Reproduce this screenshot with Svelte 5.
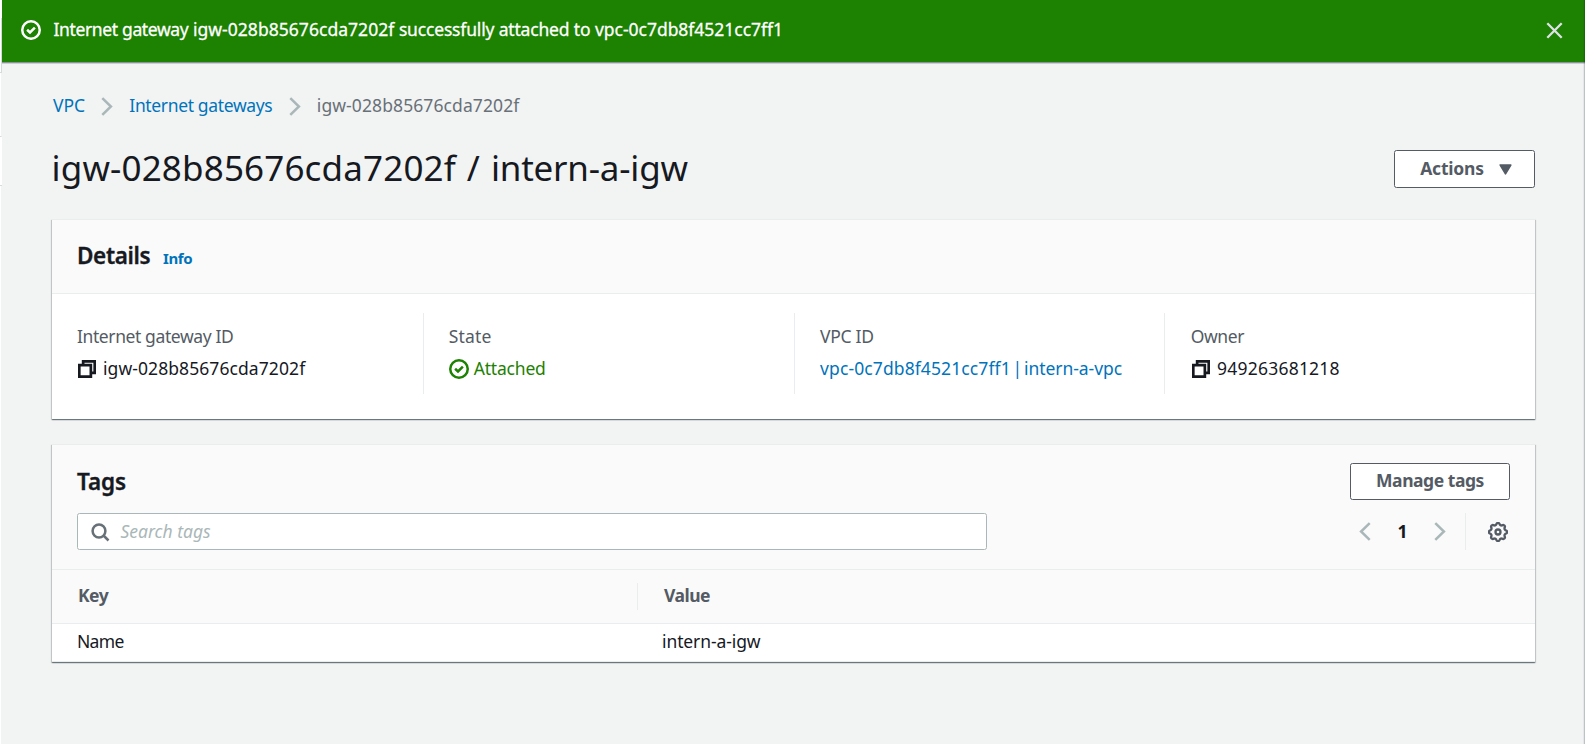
<script>
  const gear = (() => {
    const pts = [];
    for (let i = 0; i < 96; i++) {
      const a = (i / 96) * Math.PI * 2;
      const wave = Math.cos(8 * a);
      const r = 8.15 + 0.95 * Math.sign(wave) * Math.pow(Math.abs(wave), 0.6);
      pts.push(`${(10 + r * Math.sin(a)).toFixed(2)} ${(10 - r * Math.cos(a)).toFixed(2)}`);
    }
    return 'M' + pts.join('L') + 'Z';
  })();
  const tags = [{ key: 'Name', value: 'intern-a-igw' }];
</script>

{#snippet check()}
  <svg class="check" width="20" height="20" viewBox="0 0 16 16">
    <circle cx="8" cy="8" r="7" />
    <path d="M4.9 7.8l2.3 2.2 3.9-3.9" />
  </svg>
{/snippet}
{#snippet copy()}
  <svg class="copy" width="18" height="18" viewBox="1 1 14 14">
    <path d="M2 5h9v9H2zM5 5V2h9v9h-3" />
  </svg>
{/snippet}
{#snippet chevron(left)}
  <svg class="chev" class:left width="12" height="19" viewBox="0 0 12 19"><path d="M1.3 1.2l8.6 8.3-8.6 8.3" /></svg>
{/snippet}

<div class="page">
  <div class="rail">
    <i class="a"></i><i class="b"></i><i class="c"></i><i class="d"></i><i class="e"></i>
  </div>
  <div class="main">
    <div class="flash">
      {@render check()}
      <span class="msg"><span class="m1">Internet gateway</span> <span class="m2">igw-028b85676cda7202f</span> <span class="m3">successfully attached to</span> <span class="m4">vpc-0c7db8f4521cc7ff1</span></span>
      <svg class="close" width="17" height="17" viewBox="0 0 17 17"><path d="M1.3 1.3l14.4 14.4M15.7 1.3L1.3 15.7" /></svg>
    </div>

    <div class="content">
      <nav>
        <a class="vpc" href="#vpc">VPC</a>
        {@render chevron(false)}
        <a class="gws" href="#gateways">Internet gateways</a>
        {@render chevron(false)}
        <span class="here">igw-028b85676cda7202f</span>
      </nav>

      <div class="titlebar">
        <h1>igw-028b85676cda7202f / <span>intern-a-igw</span></h1>
        <button class="actions">Actions
          <svg width="13" height="11" viewBox="0 0 13 11"><path d="M1.2 1h10.6L6.5 9.8z" /></svg>
        </button>
      </div>

      <section class="details">
        <header><h2>Details</h2><a href="#info">Info</a></header>
        <div class="cols">
          <div class="col">
            <div class="label l1">Internet gateway ID</div>
            <div class="val">{@render copy()}<span class="igw">igw-028b85676cda7202f</span></div>
          </div>
          <div class="col">
            <div class="label l2">State</div>
            <div class="val ok">{@render check()}<span>Attached</span></div>
          </div>
          <div class="col">
            <div class="label l3">VPC ID</div>
            <div class="val"><a href="#v">vpc-0c7db8f4521cc7ff1 | <span>intern-a-vpc</span></a></div>
          </div>
          <div class="col">
            <div class="label l4">Owner</div>
            <div class="val owner">{@render copy()}<span class="num">949263681218</span></div>
          </div>
        </div>
      </section>

      <section class="tags">
        <div class="tools">
          <div class="row"><h2>Tags</h2><button class="manage">Manage tags</button></div>
          <div class="row">
            <div class="search">
              <svg width="19" height="19" viewBox="0 0 19 19"><circle cx="8" cy="8" r="6.4" /><path d="M12.5 12.5l5 5" /></svg>
              <span>Search tags</span>
            </div>
            <div class="pager">
              {@render chevron(true)}
              <b>1</b>
              {@render chevron(false)}
              <span class="sep"></span>
              <svg class="gear" width="20" height="20" viewBox="0 0 20 20"><path d={gear} /><circle cx="10" cy="10" r="2.5" /></svg>
            </div>
          </div>
        </div>
        <div class="thead"><span class="k">Key</span><span class="v">Value</span></div>
        {#each tags as t}
          <div class="trow"><span class="k">{t.key}</span><span class="v">{t.value}</span></div>
        {/each}
      </section>
    </div>
  </div>
</div>

<style>
  :global(body) { background: #f2f3f3; overflow: hidden; }
  * { box-sizing: border-box; }
  .page {
    position: relative; display: flex; height: 744px; background: #f2f3f3; color: #16191f;
    font: 17.5px/24px "Noto Sans", sans-serif; white-space: nowrap;
  }
  .page::after {
    content: ""; position: absolute; top: 0; right: 0; bottom: 0; width: 1px;
    background: rgba(0, 28, 36, .22); box-shadow: -1px 0 0 rgba(0, 28, 36, .05);
  }
  .rail { width: 2px; display: flex; flex-direction: column; flex: none; }
  .rail i { background: #fff; }
  .a { height: 18px; }
  .b { height: 55px; border-right: 1px solid #d5dbdb; border-bottom: 1px solid #d5dbdb; }
  .c { height: 64px; border-right: 1px solid #f2f3f3; border-bottom: 1px solid #d5dbdb; }
  .d { height: 49px; border-bottom: 1px solid #d5dbdb; }
  .e { flex: 1; border-right: 1px solid #f2f3f3; }
  .main { flex: 1; min-width: 0; }
  svg { flex: none; display: block; fill: none; stroke: currentColor; }
  a { color: #0073bb; text-decoration: none; }
  h1, h2 { margin: 0; }
  .check { stroke-width: 2; }
  .copy { stroke-width: 2.1; }
  .chev { color: #aab7b8; stroke-width: 2.5; }
  .chev.left { transform: scaleX(-1); }

  .flash {
    height: 62px; padding: 0 22.5px 2px 19px; display: flex; align-items: center;
    background: #1d8102; color: #fff; box-shadow: 0 1px 0 #8b9398, 0 2px 0 #c9cfd0;
  }
  .msg { margin: -2px 0 0 12.5px; -webkit-text-stroke: .3px #fff; }
  .m1 { letter-spacing: -.36px; }
  .m2 { letter-spacing: .04px; }
  .m3 { letter-spacing: -.17px; }
  .m4 { letter-spacing: -.02px; }
  .close { margin-left: auto; color: #dfe3e6; stroke-width: 2.3; }

  .content { padding: 31px 50px 0; }
  nav { display: flex; align-items: center; height: 24px; }
  nav > a, nav > span { height: 24px; }
  nav .chev { margin: 3px 0 0 16px; }
  .vpc { width: 32px; margin-left: 1px; }
  .gws { margin-left: 16.3px; width: 143.7px; letter-spacing: -.35px; }
  .here { margin-left: 15.8px; color: #687078; letter-spacing: .1px; }

  .titlebar { display: flex; justify-content: space-between; align-items: center; height: 38px; margin-top: 33px; }
  h1 { font-weight: 400; font-size: 35px; line-height: 38px; letter-spacing: .16px; word-spacing: 1.6px; margin: -2px 0 0 -.5px; }
  h1 span { letter-spacing: -.2px; }
  button {
    font: 700 17.5px/24px "Noto Sans", sans-serif; color: #545b64; background: #fff;
    border: 1px solid #545b64; border-radius: 2.5px; display: flex; align-items: center; justify-content: center;
    padding: 0 0 2px;
  }
  .actions { width: 141px; height: 38px; letter-spacing: -.2px; gap: 15px; padding-left: 3px; }
  .actions svg { fill: currentColor; stroke-width: 1.6; stroke-linejoin: round; margin-top: 2px; }

  section {
    background: #fff; border-top: 1px solid #eaeded;
    box-shadow: 0 1px 1px rgba(0, 28, 36, .4), 1px 1px 1px rgba(0, 28, 36, .15), -1px 1px 1px rgba(0, 28, 36, .15);
  }
  h2 { font-size: 22.5px; line-height: 28px; font-weight: 600; -webkit-text-stroke: .35px #16191f; }
  .details { margin-top: 31px; height: 200px; }
  .details header {
    height: 74px; padding: 0 25px 1px; display: flex; align-items: center;
    background: #fafafa; border-bottom: 1px solid #eaeded;
  }
  .details h2 { letter-spacing: -.35px; width: 75.5px; }
  .details header a { font-size: 15px; font-weight: 700; letter-spacing: -.4px; margin: 4px 0 0 10.5px; }
  .cols { display: grid; grid-template-columns: repeat(4, 1fr); padding-top: 19px; }
  .col { height: 81px; border-left: 1px solid #eaeded; padding: 11px 0 0 25px; }
  .col:first-child { border-left-color: transparent; }
  .label { color: #545b64; height: 24px; margin-bottom: 8px; }
  .l1 { letter-spacing: -.4px; margin-left: -1px; }
  .l2 { letter-spacing: .15px; }
  .l3 { letter-spacing: -.3px; margin-left: .6px; }
  .l4 { letter-spacing: -.45px; margin-left: .6px; }
  .val { display: flex; align-items: center; height: 24px; }
  .val .copy { margin-top: 1px; }
  .val a { letter-spacing: .1px; word-spacing: -2.9px; margin-left: .6px; }
  .val a span { letter-spacing: -.05px; }
  .igw { margin-left: 7px; letter-spacing: .08px; }
  .owner { margin-left: 1.8px; }
  .num { margin-left: 7px; letter-spacing: .22px; }
  .ok { color: #1d8102; }
  .ok span { margin-left: 5px; letter-spacing: -.2px; }
  .ok .check { margin-top: 1px; }

  .tags { margin-top: 25px; }
  .tools { background: #fafafa; border-bottom: 1px solid #eaeded; padding: 18px 25px 19px; height: 125px; display: flex; flex-direction: column; justify-content: space-between; }
  .row { display: flex; justify-content: space-between; align-items: center; height: 37px; }
  .tags h2 { margin-top: 0; letter-spacing: -.1px; }
  .manage { width: 160px; height: 37px; letter-spacing: -.45px; padding-bottom: 3px; }
  .search {
    width: 910px; height: 37px; border: 1px solid #aab7b8; border-radius: 2.5px; background: #fff;
    display: flex; align-items: center; padding-left: 13px; color: #687078; stroke-width: 2.5;
  }
  .search svg { margin-top: 1px; }
  .search span { margin: -1px 0 0 10.5px; color: #aab7b8; font-style: italic; letter-spacing: 0; }
  .pager { display: flex; align-items: center; height: 37px; padding-right: 2px; }
  .pager b { font-weight: 700; font-size: 17.5px; width: 10px; text-align: center; margin: -2px 26.5px 0 26.5px; }
  .sep { width: 1px; height: 37px; background: #eaeded; margin: 0 22px 0 19px; }
  .gear { color: #545b64; stroke-width: 2.3; }

  .thead, .trow { display: flex; align-items: center; }
  .thead { height: 54px; background: #fafafa; border-bottom: 1px solid #eaeded; color: #545b64; font-weight: 700; }
  .k { width: 586px; padding-left: 25px; }
  .thead .k { height: 27px; padding-left: 26px; border-right: 1px solid #eaeded; letter-spacing: -.5px; }
  .thead .v { height: 27px; padding-left: 26px; letter-spacing: -.5px; }
  .trow { height: 38px; padding-bottom: 3px; border-bottom: 1px solid #eaeded; }
  .trow .k { letter-spacing: -.7px; }
  .trow .v { padding-left: 24px; letter-spacing: -.1px; }
</style>
